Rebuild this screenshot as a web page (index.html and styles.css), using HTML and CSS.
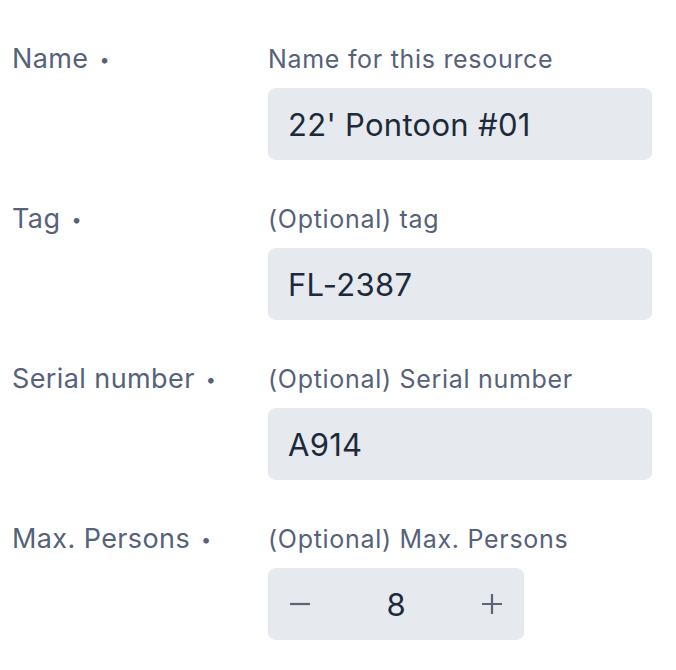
FILE: index.html
```html
<!DOCTYPE html>
<html>
<head>
    <meta charset="UTF-8">
    <title>Resource</title>
    <link rel="stylesheet" href="styles.css">
</head>
<body>
    <form class="form">
        <div class="row">
            <div class="label">Name <span class="dot">•</span></div>
            <div class="field">
                <div class="hint">Name for this resource</div>
                <div class="input">22' Pontoon #01</div>
            </div>
        </div>
        <div class="row">
            <div class="label">Tag <span class="dot">•</span></div>
            <div class="field">
                <div class="hint">(Optional) tag</div>
                <div class="input">FL-2387</div>
            </div>
        </div>
        <div class="row">
            <div class="label">Serial number <span class="dot">•</span></div>
            <div class="field">
                <div class="hint">(Optional) Serial number</div>
                <div class="input">A914</div>
            </div>
        </div>
        <div class="row">
            <div class="label">Max. Persons <span class="dot">•</span></div>
            <div class="field">
                <div class="hint">(Optional) Max. Persons</div>
                <div class="stepper">
                    <span class="step">
                        <svg width="20" height="20" viewBox="0 0 20 20"><path d="M0 10h20" stroke="#5b6577" stroke-width="2.2"/></svg>
                    </span>
                    <span class="value">8</span>
                    <span class="step">
                        <svg width="20" height="20" viewBox="0 0 20 20"><path d="M0 10h20M10 0v20" stroke="#5b6577" stroke-width="2.2"/></svg>
                    </span>
                </div>
            </div>
        </div>
    </form>
</body>
</html>
```

FILE: styles.css
```css
body {
    margin: 0;
    font-family: Inter, "Noto Sans", sans-serif;
    background: #fff;
}
.form {
    padding: 43px 12px 0;
}
.row {
    display: grid;
    grid-template-columns: 256px 384px;
    margin-bottom: 43px;
}
.label, .hint {
    line-height: 32px;
    color: #56617a;
}
.label {
    font-size: 27px;
    letter-spacing: 0.4px;
}
.hint {
    font-size: 25px;
    letter-spacing: 0.7px;
    margin-bottom: 13px;
}
.dot {
    font-size: 18px;
    margin-left: 3px;
    vertical-align: 2px;
}
.input {
    height: 72px;
    box-sizing: border-box;
    padding: 0 20px;
    display: flex;
    align-items: center;
    background: #e6e9ee;
    border-radius: 8px;
    font-size: 31px;
    letter-spacing: 0.3px;
    color: #1c2a3b;
}
.stepper {
    width: 256px;
    height: 72px;
    display: flex;
    align-items: center;
    background: #e6e9ee;
    border-radius: 8px;
}
.step {
    width: 64px;
    display: flex;
    justify-content: center;
}
.value {
    flex: 1;
    text-align: center;
    font-size: 31px;
    color: #1c2a3b;
}
```
